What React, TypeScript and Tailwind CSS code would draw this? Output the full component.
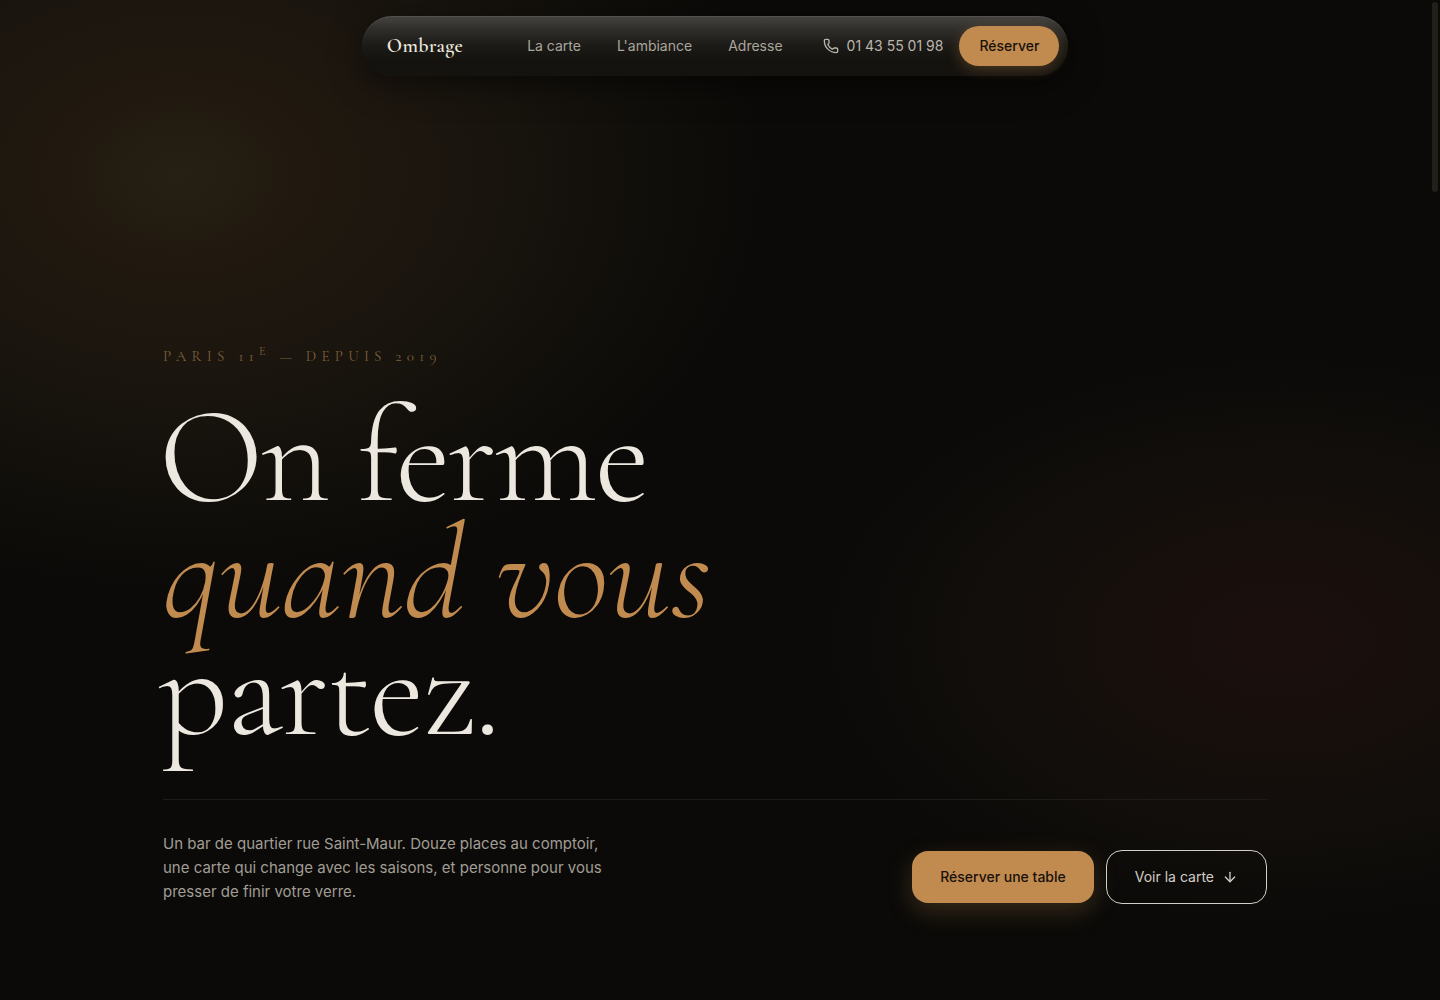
import { ArrowDown, Phone } from "lucide-react";

const links = [
  { label: "La carte", href: "#carte" },
  { label: "L'ambiance", href: "#ambiance" },
  { label: "Adresse", href: "#adresse" },
];

function Nav() {
  return (
    <header className="flex justify-center px-4 pt-4">
      <nav
        aria-label="Navigation principale"
        className="flex h-[60px] items-center rounded-full bg-[linear-gradient(to_bottom,#464440_0%,#302e2b_22%,#1d1b17_48%,#14120e_75%,#151310_100%)] pr-[9px] pl-[25px] shadow-[inset_0_1px_0_rgba(255,255,255,0.08),0_8px_32px_rgba(0,0,0,0.5)]"
      >
        <a
          href="#accueil"
          className="font-['Cormorant_Garamond','Liberation_Serif',serif] text-xl font-semibold tracking-[0.02em] text-[#ece8df]"
        >
          Ombrage
        </a>
        <div className="ml-16 flex gap-9 text-sm text-[#aaa69e]">
          {links.map((link) => (
            <a key={link.href} href={link.href}>
              {link.label}
            </a>
          ))}
        </div>
        <a href="tel:+33143550198" className="ml-10 flex items-center gap-2 text-sm text-[#bab6ae]">
          <Phone size={16} strokeWidth={2} aria-hidden="true" />
          01 43 55 01 98
        </a>
        <button
          type="button"
          className="ml-4 h-10 rounded-full bg-[#c18b50] px-5 text-sm font-medium text-[#18110a] shadow-[0_4px_14px_rgba(193,139,80,0.3)]"
        >
          Réserver
        </button>
      </nav>
    </header>
  );
}

export default function App() {
  return (
    <div
      id="accueil"
      className="relative flex min-h-screen flex-col bg-[#0b0a08] bg-[radial-gradient(ellipse_590px_420px_at_180px_175px,#262014_0%,#21190f_20%,#1c160f_42%,#14110c_68%,transparent_100%),radial-gradient(ellipse_470px_290px_at_89%_64%,#1b0f0d_0%,#170f0c_32%,#110e0b_65%,transparent_100%)] pr-[10px] font-['Inter',sans-serif] antialiased"
    >
      <Nav />
      <main className="mx-auto flex w-full max-w-6xl flex-1 flex-col justify-end px-6 pb-24">
        <p className="mb-8 font-['Cormorant_Garamond','Liberation_Serif',serif] text-[15px] leading-5 tracking-[0.35em] text-[#80603a] uppercase">
          Paris 11<sup className="text-xs">e</sup> — Depuis 2019
        </p>
        <h1 className="mb-[50px] -ml-1 font-['Cormorant_Garamond','Liberation_Serif',serif] text-[136px] leading-[117px] font-light tracking-[-0.02em] text-[#ece8df]">
          On ferme
          <br />
          <em className="pl-1 tracking-normal text-[#c18b50]">quand vous</em>
          <br />
          partez.
        </h1>
        <div className="flex flex-wrap items-end justify-between gap-6 border-t border-[#1d1c19] pt-8">
          <p className="max-w-md text-[15px] leading-6 text-[#a19d95]">
            Un bar de quartier rue Saint-Maur. Douze places au comptoir, une carte qui change avec
            les saisons, et personne pour vous presser de finir votre verre.
          </p>
          <div className="flex items-center gap-3 text-sm">
            <button
              type="button"
              className="h-[52px] rounded-2xl bg-[#c18b50] px-7 font-medium text-[#18110a] shadow-[0_8px_24px_rgba(193,139,80,0.25)]"
            >
              Réserver une table
            </button>
            <a
              href="#carte"
              className="flex h-[54px] items-center gap-2 rounded-2xl border border-[#d2cfc8] px-7 text-[#d2cec6]"
            >
              Voir la carte
              <ArrowDown size={16} strokeWidth={2} aria-hidden="true" />
            </a>
          </div>
        </div>
      </main>
      <div
        aria-hidden="true"
        className="absolute top-0.5 right-0.5 h-[190px] w-1.5 rounded-full bg-[#22201b]"
      />
    </div>
  );
}
